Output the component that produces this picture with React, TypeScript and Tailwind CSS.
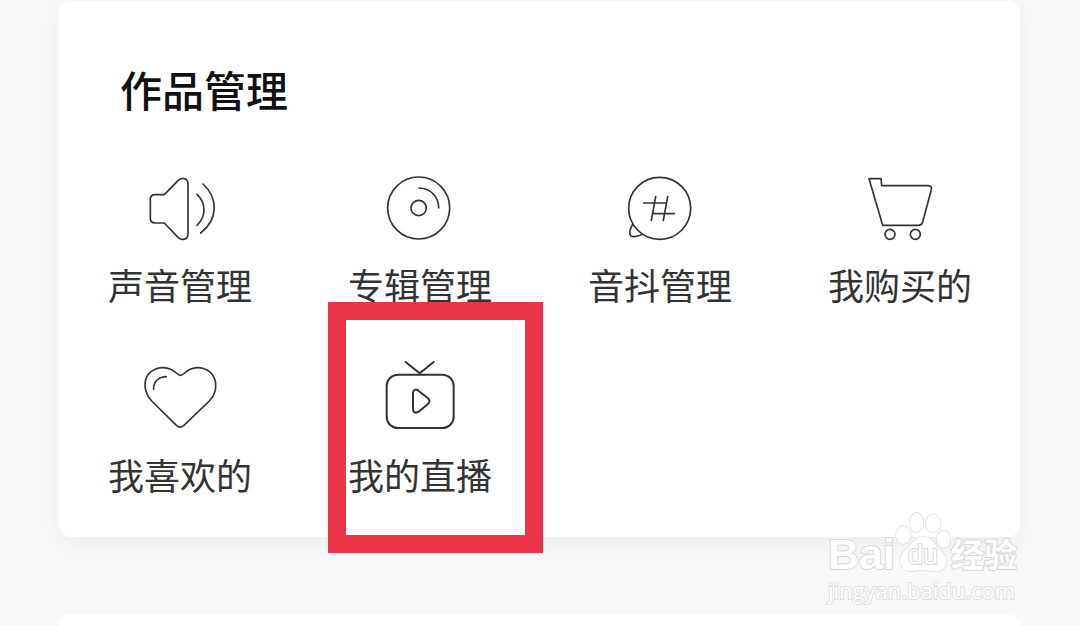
import type { ReactNode } from "react";

type Item = {
  label: string;
  icon: ReactNode;
  marked?: boolean;
};

function Icon({ viewBox = "150 24 240 240", children }: { viewBox?: string; children: ReactNode }) {
  return (
    <svg
      viewBox={viewBox}
      className="size-20"
      fill="none"
      stroke="currentColor"
      strokeWidth={5}
      strokeLinecap="round"
      strokeLinejoin="round"
      aria-hidden="true"
    >
      {children}
    </svg>
  );
}

const SpeakerIcon = (
  <Icon>
    <path d="M223 104 L264 62 C275 50 294 54 294 72 V221 C294 239 275 243 264 232 L223 189 H195 Q181 189 181 175 V118 Q181 104 195 104 Z" />
    <path d="M321 103 C349 129 349 169 321 196" />
    <path d="M339 72 C385 114 385 178 332 219" />
  </Icon>
);

const DiscIcon = (
  <Icon>
    <circle cx="266" cy="144" r="93" />
    <circle cx="266" cy="144" r="23" />
    <path d="M267 84 C301 84 326 110 326 144" />
  </Icon>
);

const HashIcon = (
  <Icon>
    <circle cx="269" cy="145" r="93" />
    <path d="M188 193 C176 214 176 229 190 230 C200 231 209 227 218 223" />
    <path d="M257 110 L244 181 M293 110 L280 181 M221 129 H290 M247 161 H313" />
  </Icon>
);

const CartIcon = (
  <Icon>
    <path d="M177 56 H213 L215 77 H355 Q367 78 364 89 L338 186 Q335 196 325 196 H218 Z" />
    <circle cx="240" cy="223" r="15" />
    <circle cx="316" cy="223" r="15" />
  </Icon>
);

const HeartIcon = (
  <Icon>
    <path d="M263 72 C244 54 219 49 197 57 C168 68 160 97 168 124 C171 135 177 145 185 153 L260 227 Q270 236 281 227 L358 153 C366 145 372 136 375 124 C382 96 372 67 344 57 C322 49 299 54 280 72 Q271 80 263 72 Z" />
    <path d="M191 118 C190 94 207 80 229 80" />
  </Icon>
);

const LiveIcon = (
  <Icon viewBox="180 204 240 240">
    <g strokeWidth={6}>
      <rect x="200" y="254" width="201" height="160" rx="34" />
      <path d="M257 216 L299 250 L341 216" />
      <path d="M279 309 C279 299 287 296 295 302 L323 324 Q334 333 323 343 L296 365 C287 371 279 367 279 357 Z" />
    </g>
  </Icon>
);

const items: Item[] = [
  { label: "声音管理", icon: SpeakerIcon },
  { label: "专辑管理", icon: DiscIcon },
  { label: "音抖管理", icon: HashIcon },
  { label: "我购买的", icon: CartIcon },
  { label: "我喜欢的", icon: HeartIcon },
  { label: "我的直播", icon: LiveIcon, marked: true },
];

function Tile({ label, icon, marked }: Item) {
  return (
    <div className="relative flex justify-center">
      <button type="button" className="flex flex-col items-center gap-3 text-[#333333]">
        {icon}
        <span className="text-[36px] leading-[48px] whitespace-nowrap">{label}</span>
      </button>
      {marked && (
        <div className="pointer-events-none absolute -top-14 -right-[3px] -bottom-[55px] left-7 border-[18px] border-[#ea3447]" />
      )}
    </div>
  );
}

function Watermark() {
  return (
    <div className="pointer-events-none absolute right-[56px] bottom-[20px] w-[196px] font-['Liberation_Sans','Noto_Sans_CJK_SC',sans-serif] text-white [-webkit-text-stroke:2px_#d8d8d8] [paint-order:stroke_fill]">
      <div className="flex items-end">
        <span className="text-[43px] leading-[40px] font-bold">Bai</span>
        <div className="relative h-[64px] w-[56px]">
          <svg
            viewBox="250 28 174 192"
            className="size-full"
            fill="#ffffff"
            stroke="#d8d8d8"
            strokeWidth={4}
            aria-hidden="true"
          >
            <ellipse cx="276" cy="102" rx="23" ry="28" />
            <ellipse cx="317" cy="63" rx="21" ry="30" />
            <ellipse cx="368" cy="66" rx="23" ry="28" />
            <ellipse cx="401" cy="115" rx="21" ry="27" />
            <path d="M337 107 C309 107 304 131 286 146 C265 162 260 185 273 203 C286 221 311 212 337 212 C363 212 389 222 403 204 C415 187 411 168 393 151 C373 133 366 107 337 107 Z" />
          </svg>
          <span className="absolute inset-x-0 bottom-1 text-center text-[27px] leading-[30px]">du</span>
        </div>
        <span className="text-[33px] leading-[36px] font-bold whitespace-nowrap">经验</span>
      </div>
      <div className="font-['Open_Sans',sans-serif] text-[22px] leading-[32px] [-webkit-text-stroke:2px_#e0e0e0]">
        jingyan.baidu.com
      </div>
    </div>
  );
}

export default function App() {
  return (
    <main className="relative flex min-h-screen flex-col overflow-hidden bg-[#f9f9f9] pt-px pr-[60px] pl-[59px] font-['Noto_Sans_CJK_SC',sans-serif]">
      <section className="rounded-xl bg-white pb-[39px] pl-px shadow-[0_6px_24px_rgba(0,0,0,0.05)]">
        <h1 className="px-[60px] pt-[58px] text-[42px] leading-[60px] font-medium text-[#111111]">作品管理</h1>
        <div className="mt-[49px] grid grid-cols-4 gap-y-[50px]">
          {items.map((item) => (
            <Tile key={item.label} {...item} />
          ))}
        </div>
      </section>
      <section className="mt-[77px] flex-1 rounded-t-xl bg-white" />
      <Watermark />
    </main>
  );
}
